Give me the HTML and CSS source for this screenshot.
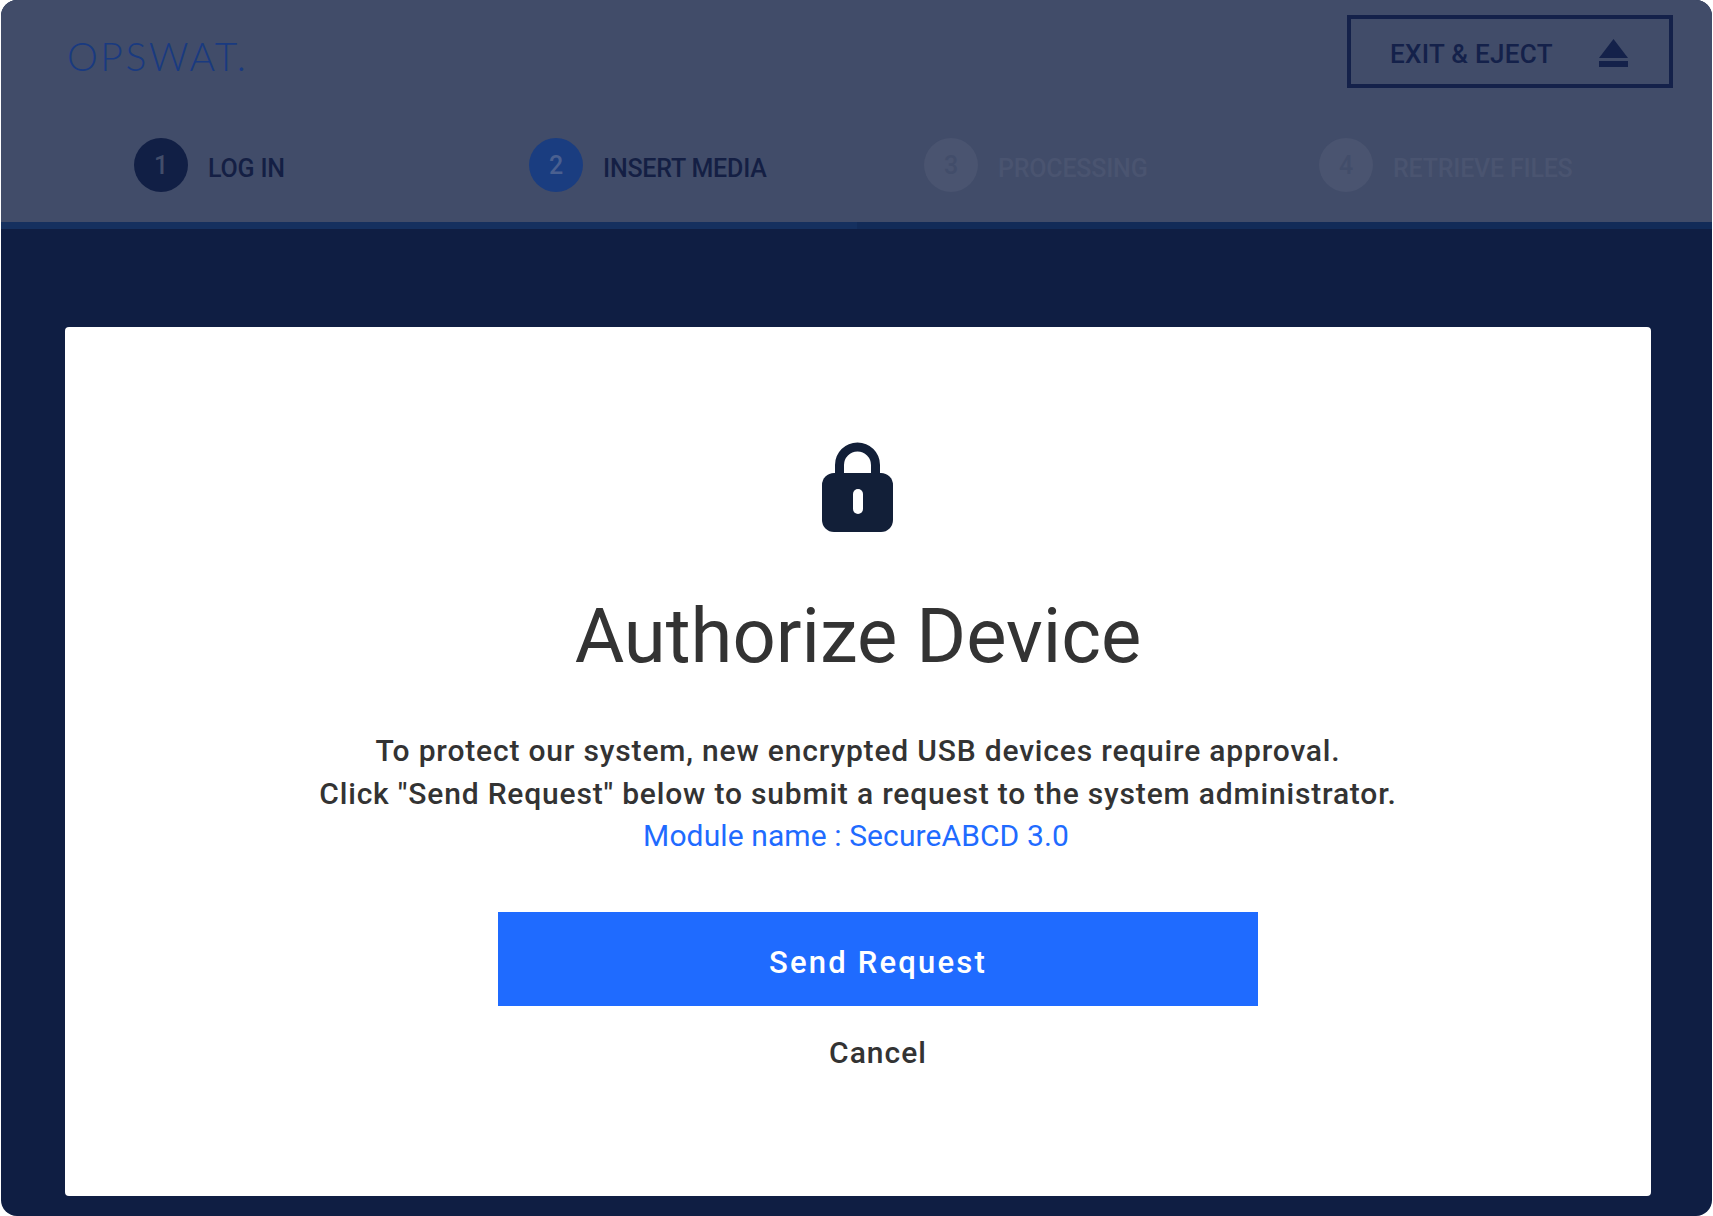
FILE: index.html
```html
<!DOCTYPE html>
<html lang="en">
<head>
    <meta charset="UTF-8">
    <meta name="viewport" content="width=device-width, initial-scale=1.0">
    <title>Authorize Device</title>
    <link rel="stylesheet" href="styles.css">
</head>
<body>

<div class="frame">
    <header class="top">
        <div class="top-row">
            <div class="logo">OPSWAT<span class="logo-dot">.</span></div>
            <button class="exit-btn">
                <span>EXIT &amp; EJECT</span>
                <svg class="eject" viewBox="0 0 29 28" width="29" height="28">
                    <polygon points="14.5,0 29,19 0,19"/>
                    <rect x="0" y="22" width="29" height="6"/>
                </svg>
            </button>
        </div>
        <ol class="steps">
            <li class="step done"><span class="num">1</span><span class="step-name">LOG IN</span></li>
            <li class="step current"><span class="num">2</span><span class="step-name">INSERT MEDIA</span></li>
            <li class="step todo"><span class="num">3</span><span class="step-name">PROCESSING</span></li>
            <li class="step todo"><span class="num">4</span><span class="step-name">RETRIEVE FILES</span></li>
        </ol>
    </header>
    <div class="progress"><div class="progress-fill"></div></div>

    <main class="content">
        <section class="card">
            <svg class="lock" viewBox="0 0 71 90" width="71" height="90">
                <path class="shackle" d="M17.5 35 V23 a18 18 0 0 1 36 0 V35"/>
                <rect class="lock-body" x="0" y="31" width="71" height="59" rx="12"/>
                <rect class="keyhole" x="31" y="47" width="10" height="25" rx="5"/>
            </svg>
            <h1>Authorize Device</h1>
            <p class="message">
                To protect our system, new encrypted USB devices require approval.<br>
                Click "Send Request" below to submit a request to the system administrator.<br>
                <span class="module">Module name : SecureABCD 3.0</span>
            </p>
            <div class="actions">
                <button class="send-btn">Send Request</button>
                <button class="cancel-btn">Cancel</button>
            </div>
        </section>
    </main>
</div>

</body>
</html>
```

FILE: styles.css
```css
* { box-sizing: border-box; }
body { margin: 0; background-color: #fff; font-family: 'Roboto', 'Liberation Sans', sans-serif; }
button { font-family: inherit; cursor: pointer; }

.frame { height: 1216px; margin: 0 1px; background-color: #0f1e43; border-radius: 16px; overflow: hidden; display: flex; flex-direction: column; }

.top { height: 222px; background-color: #414c69; }
.top-row { display: flex; justify-content: space-between; align-items: flex-start; padding: 15px 39px 0 66px; }
.logo { margin-top: 18px; font-family: 'Lato', sans-serif; font-weight: 300; font-size: 39px; line-height: 46px; letter-spacing: 2.5px; color: #193a80; }
.logo-dot { margin-left: -3px; }
.exit-btn { width: 326px; height: 73px; padding: 4px 41px 0 39px; display: flex; justify-content: space-between; align-items: center; background: none; border: 4px solid #14214a; color: #14214a; font-size: 26px; font-weight: 500; letter-spacing: 0.3px; }
.eject { fill: #14214a; margin-top: -2px; }

.steps { list-style: none; margin: 50px 0 0; padding: 0 0 0 133px; display: grid; grid-template-columns: repeat(4, 395px); }
.step { display: flex; align-items: center; gap: 20px; }
.num { width: 54px; height: 54px; border-radius: 50%; display: flex; align-items: center; justify-content: center; font-size: 25px; font-weight: 500; }
.step-name { font-size: 25px; font-weight: 500; padding-top: 6px; color: #141f44; letter-spacing: -0.2px; }
.done .num { background-color: #111f45; color: #424d6a; }
.current .num { background-color: #1a3d80; color: #4a6090; }
.todo .num { background-color: #4a5470; color: #424d6a; }
.todo .step-name { color: #4a5470; }

.progress { height: 7px; background-color: #122b58; }
.progress-fill { width: 50%; height: 100%; background-color: #15305f; }

.content { flex: 1; padding: 98px 61px 20px 64px; }
.card { height: 869px; padding-top: 115px; background-color: #fff; border-radius: 4px; display: flex; flex-direction: column; align-items: center; }
.lock { display: block; margin-left: -2px; }
.shackle { fill: none; stroke: #121f38; stroke-width: 9; }
.lock-body { fill: #121f38; }
.keyhole { fill: #fff; }

h1 { margin: 59px 0 0; font-size: 76px; line-height: 90px; font-weight: 400; color: #333; }
.message { margin: 49px 0 0; font-size: 30px; line-height: 42.6px; font-weight: 500; letter-spacing: 0.82px; text-align: center; color: #333; }
.module { margin-right: 4px; color: #1f6bff; font-weight: 400; letter-spacing: 0.1px; }

.actions { margin: 54px 0 0 40px; display: flex; flex-direction: column; align-items: center; }
.send-btn { width: 760px; height: 94px; padding-top: 9px; border: none; background-color: #1f6bff; color: #fff; font-size: 31px; font-weight: 500; letter-spacing: 2.2px; }
.cancel-btn { margin-top: 29px; padding: 0; border: none; background: none; color: #333; font-size: 30px; font-weight: 500; letter-spacing: 1px; }
```
